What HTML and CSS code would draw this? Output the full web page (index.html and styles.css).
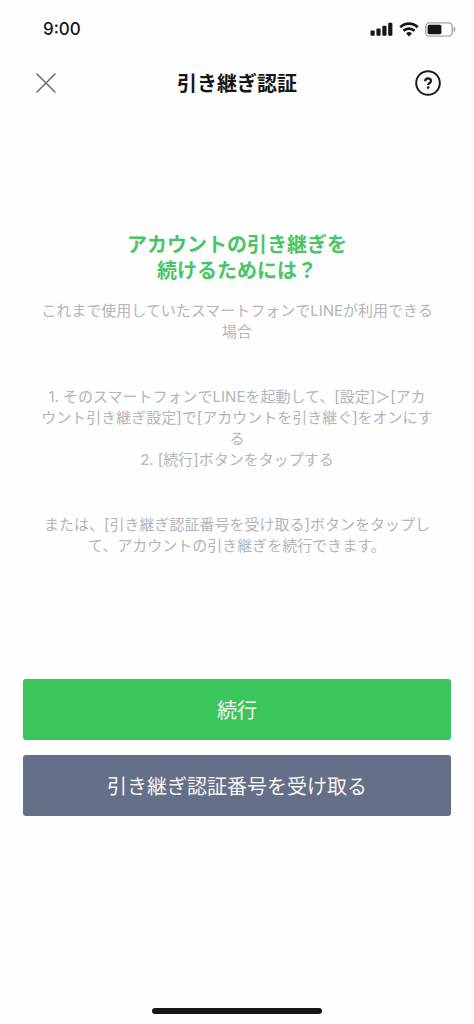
FILE: index.html
```html
<!DOCTYPE html>
<html lang="ja">
<head>
<meta charset="utf-8">
<meta name="viewport" content="width=device-width, initial-scale=1">
<title>引き継ぎ認証</title>
<link rel="stylesheet" href="styles.css">
</head>
<body>
<div class="screen">
  <div class="status">
    <span class="time">9:00</span>
    <div class="indicators">
      <svg width="23" height="15" viewBox="0 0 23 15" fill="#161616" aria-hidden="true">
        <rect x="0.5" y="8.6" width="4.2" height="5.2" rx="1"/>
        <rect x="6.4" y="6.4" width="4.2" height="7.4" rx="1"/>
        <rect x="12.3" y="3.8" width="4.2" height="10" rx="1"/>
        <rect x="18.2" y="0.8" width="4.2" height="13" rx="1"/>
      </svg>
      <svg width="20" height="15" viewBox="0 0 20 15" fill="none" stroke="#161616" stroke-width="2.7" aria-hidden="true">
        <path d="M1.3 5.2a12.4 12.4 0 0 1 17.4 0"/>
        <path d="M4.5 8.8a7.8 7.8 0 0 1 11 0"/>
        <path d="M10 14.4l-2.9-3a4.2 4.2 0 0 1 5.8 0z" fill="#161616" stroke="none"/>
      </svg>
      <svg width="31" height="15" viewBox="0 0 31 15" aria-hidden="true">
        <rect x="0.7" y="0.9" width="26.5" height="13.2" rx="3.6" fill="none" stroke="#a6a6aa" stroke-width="1.4"/>
        <rect x="2.6" y="2.8" width="13.8" height="9.4" rx="1.6" fill="#161616"/>
        <path d="M28.8 5v5c1.9-.7 1.9-4.3 0-5z" fill="#a6a6aa" stroke="#a6a6aa" stroke-width="0.5"/>
      </svg>
    </div>
  </div>
  <header class="bar">
    <button class="icon-button" type="button" aria-label="閉じる">
      <svg width="20" height="20" viewBox="0 0 20 20" stroke="#6d6f76" stroke-width="1.6" stroke-linecap="round"><path d="M1 1l18 18M19 1L1 19"/></svg>
    </button>
    <h1 class="title">引き継ぎ認証</h1>
    <button class="icon-button" type="button" aria-label="ヘルプ">
      <svg width="26" height="26" viewBox="0 0 26 26" fill="none" stroke="#1c1c1e">
        <circle cx="13" cy="13" r="11.8" stroke-width="2"/>
        <path d="M10.2 11.2c0-3.7 5.8-3.6 5.8-.3 0 2.1-2.8 2-2.8 4.1" stroke-width="2.3"/>
        <circle cx="13.2" cy="17.6" r="1.4" fill="#1c1c1e" stroke="none"/>
      </svg>
    </button>
  </header>
  <main class="content">
    <h2 class="heading">アカウントの引き継ぎを<br>続けるためには？</h2>
    <p class="text">これまで使用していたスマートフォンでLINEが利用できる<br>場合</p>
    <p class="text">1. そのスマートフォンでLINEを起動して、[設定]＞[アカ<br>ウント引き継ぎ設定]で[アカウントを引き継ぐ]をオンにす<br>る<br>2. [続行]ボタンをタップする</p>
    <p class="text">または、[引き継ぎ認証番号を受け取る]ボタンをタップし<br>て、アカウントの引き継ぎを続行できます。</p>
  </main>
  <div class="actions">
    <button class="action primary" type="button">続行</button>
    <button class="action secondary" type="button">引き継ぎ認証番号を受け取る</button>
  </div>
  <div class="home"></div>
</div>
</body>
</html>
```
FILE: styles.css
```css
* { box-sizing: border-box; }

body {
  margin: 0;
  background: #fefefe;
  font-family: Inter, "Noto Sans CJK JP", sans-serif;
}

.screen {
  display: flex;
  flex-direction: column;
  min-height: 100vh;
  padding-bottom: 10px;
}

.status {
  display: flex;
  justify-content: space-between;
  align-items: center;
  height: 56px;
  padding: 2px 18px 0 43px;
}

.time {
  color: #161616;
  font-size: 17px;
  font-weight: 500;
  line-height: 20px;
}

.indicators {
  display: flex;
  align-items: center;
  gap: 6px;
}

.bar {
  display: flex;
  justify-content: space-between;
  align-items: center;
  height: 54px;
  padding: 0 28px;
}

.icon-button {
  display: grid;
  place-items: center;
  width: 36px;
  height: 36px;
  padding: 0;
  border: 0;
  background: none;
}

.title {
  margin: 0;
  padding-top: 2px;
  color: #161616;
  font-size: 20px;
  font-weight: 700;
  line-height: 28px;
}

.content {
  display: flex;
  flex-direction: column;
  padding: 122px 36px 0;
  text-align: center;
}

.heading {
  margin: 0 0 16px;
  color: #49c563;
  font-size: 20px;
  font-weight: 700;
  line-height: 26px;
}

.text {
  margin: 0 0 44px;
  color: #b2b5b9;
  font-size: 15px;
  line-height: 21px;
}

.actions {
  display: flex;
  flex-direction: column;
  gap: 15px;
  padding: 79px 23px 0;
}

.action {
  min-height: 61px;
  padding: 8px;
  border: 0;
  border-radius: 3px;
  color: #f4f6f5;
  font: 400 20px/28px "Noto Sans CJK JP", sans-serif;
}

.primary { background: #3bc65c; }
.secondary { background: #666f88; }

.home {
  width: 36%;
  height: 6px;
  margin: auto auto 0;
  border-radius: 3px;
  background: #161616;
}
```
